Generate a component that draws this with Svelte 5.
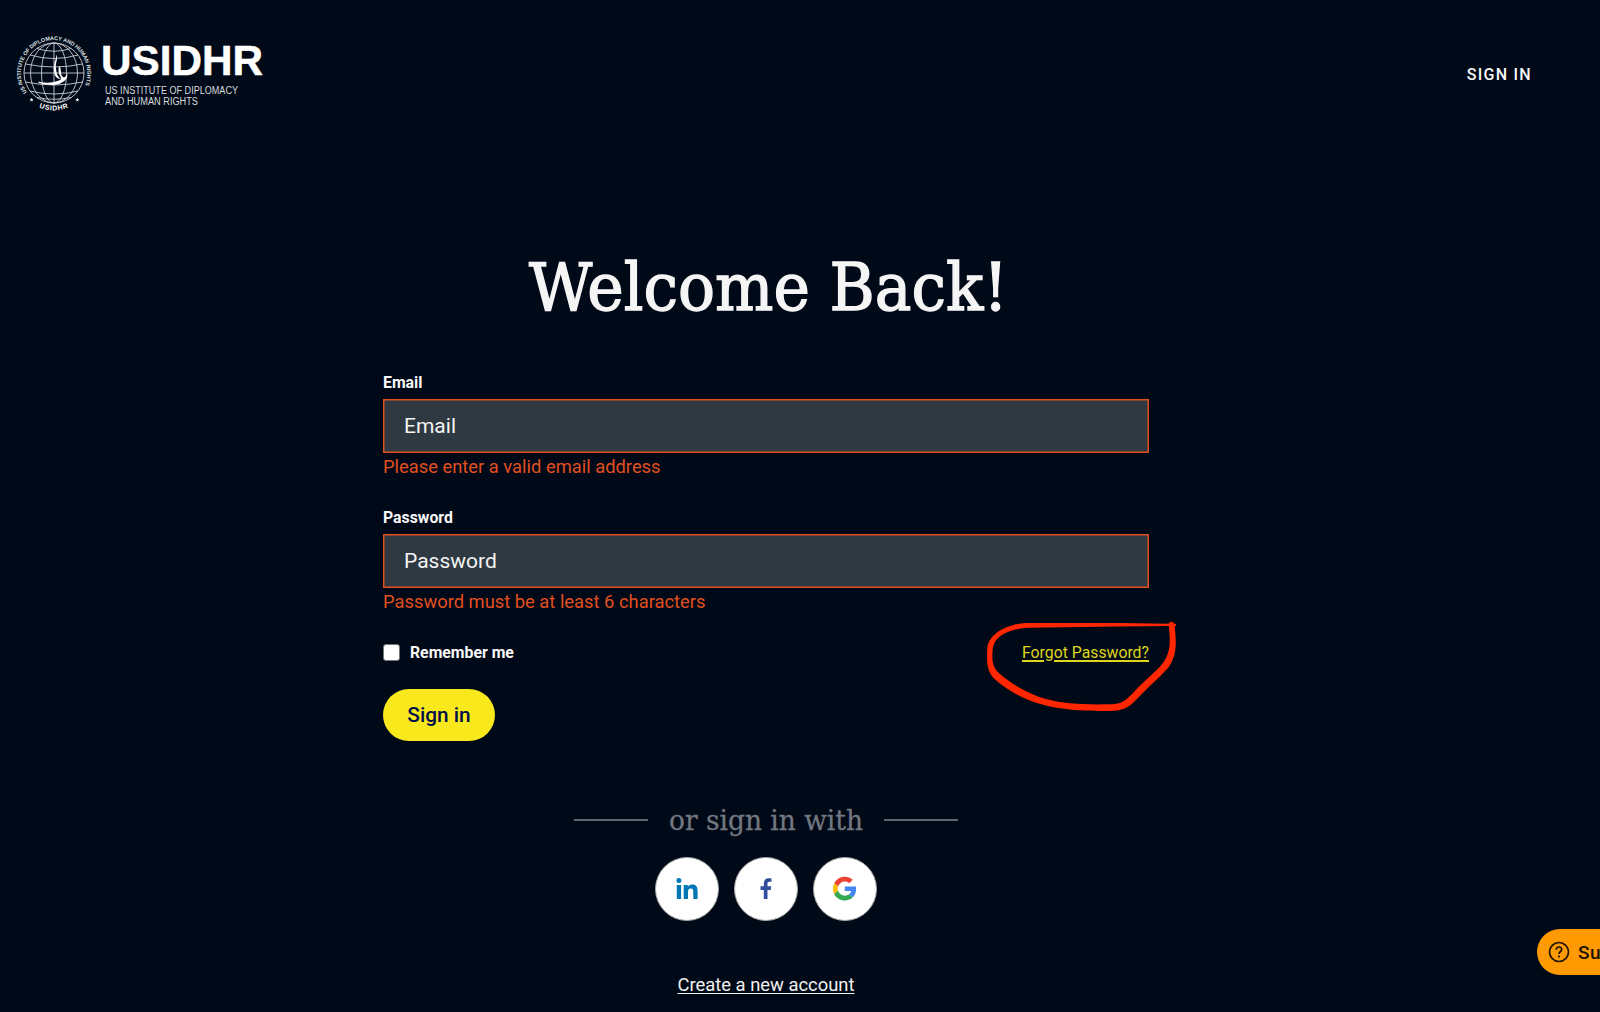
<script>
    let email = "";
    let password = "";
    let remember = false;
</script>

<style>
    :global(body) {
        background: #000917;
        overflow: hidden;
    }
    .page {
        position: relative;
        box-sizing: border-box;
        height: 1012px;
        overflow: hidden;
        background: #000917;
        color: #f8f8f8;
        font-family: Roboto, sans-serif;
    }
    header {
        display: flex;
        justify-content: space-between;
        align-items: center;
        height: 150px;
        padding-right: 68px;
    }
    .logo {
        display: block;
        overflow: visible;
        width: 280px;
        height: 150px;
        font-family: "Liberation Sans", sans-serif;
        fill: #fff;
    }
    .nav-link {
        margin-bottom: 2px;
        color: #f8f8f8;
        font-size: 16px;
        font-weight: 500;
        letter-spacing: 1.28px;
        text-decoration: none;
    }
    main {
        width: 766px;
        margin-left: 383px;
    }
    .title {
        display: block;
        overflow: visible;
        width: 510px;
        height: 90px;
        margin: 90px auto 0;
        fill: #f5f5f5;
        stroke: #f5f5f5;
        stroke-width: 1.4px;
        font-family: "Roboto Slab", "DejaVu Serif", serif;
    }
    form {
        padding-top: 43px;
    }
    .field {
        height: 135px;
    }
    .field label {
        display: block;
        height: 26px;
        line-height: 20px;
        font-size: 15.8px;
        font-weight: 700;
    }
    .field input {
        display: block;
        box-sizing: border-box;
        width: 100%;
        height: 54px;
        padding: 0 20px;
        border: 1px solid #e04f20;
        border-radius: 0;
        background: #2f3941;
        box-shadow: inset 0 0 0 0.5px #e04f20;
        color: #f8f8f8;
        font: 21px/50px Roboto, sans-serif;
    }
    .field input::placeholder {
        color: #f4f4f4;
        opacity: 1;
    }
    .error {
        margin: 0;
        color: #e04f20;
        font-size: 18.35px;
        line-height: 27px;
    }
    .options {
        display: flex;
        justify-content: space-between;
        align-items: center;
        height: 24px;
        margin-top: -3px;
        font-size: 15.8px;
    }
    .remember {
        display: flex;
        align-items: center;
        gap: 10px;
        font-weight: 700;
    }
    .remember input {
        appearance: none;
        width: 17px;
        height: 17px;
        margin: 0;
        border: 1px solid #767676;
        border-radius: 3px;
        background: #fff;
    }
    .forgot {
        color: #dfd51f;
        text-decoration-thickness: 1.5px;
        text-underline-offset: 2px;
    }
    .submit {
        display: block;
        width: 112px;
        height: 52px;
        margin-top: 25px;
        padding: 0;
        border: 0;
        border-radius: 26px;
        background: #f9e81b;
        color: #000f4b;
        font: 500 20.8px Roboto, sans-serif;
    }
    .divider {
        display: flex;
        align-items: center;
        justify-content: space-between;
        width: 384px;
        height: 40px;
        margin: 59px auto 0;
    }
    .divider span {
        width: 74px;
        height: 2px;
        background: #62656d;
    }
    .divider svg {
        overflow: visible;
        width: 200px;
        height: 40px;
        fill: #737780;
        stroke: #737780;
        stroke-width: 0.3px;
        font-family: "Roboto Slab", "DejaVu Serif", serif;
    }
    .social {
        display: flex;
        justify-content: center;
        gap: 15px;
        margin-top: 17px;
    }
    .social a {
        box-sizing: border-box;
        width: 64px;
        height: 64px;
        border: 1px solid #a5a5a5;
        border-radius: 50%;
        background: #fff;
    }
    .social svg {
        display: block;
        width: 62px;
        height: 62px;
    }
    .create {
        display: block;
        margin-top: 52px;
        color: #f0f0f0;
        font-size: 18.4px;
        line-height: 24px;
        text-align: center;
        text-underline-offset: 2px;
    }
    .scribble {
        position: absolute;
        top: 600px;
        left: 970px;
        width: 220px;
        height: 120px;
        fill: #ff2600;
        pointer-events: none;
    }
    .support {
        position: absolute;
        top: 929px;
        left: 1537px;
        display: flex;
        align-items: center;
        gap: 8px;
        box-sizing: border-box;
        width: 140px;
        height: 46px;
        padding: 0 0 0 11px;
        border: 0;
        border-radius: 23px;
        background: #ff9a03;
        color: #1c1300;
        font: 500 19px Roboto, sans-serif;
        letter-spacing: 0.4px;
    }
</style>

<div class="page">
    <header>
        <svg class="logo" viewBox="0 0 280 150" role="img" aria-label="USIDHR">
            <defs>
                <path id="ring-top" d="M27 92.500A33.200 33.200 0 1 1 80 94" />
                <path id="ring-bottom" d="M32 103.400A38 38 0 0 0 76 103.400" />
            </defs>
            <g fill="none" stroke="#c9cdd3" stroke-width="0.9">
                <circle cx="54" cy="73" r="30" />
                <ellipse cx="54" cy="73" rx="23.500" ry="30" />
                <ellipse cx="54" cy="73" rx="12.500" ry="30" />
                <path d="M54 43v60M24 73h60M25.500 64Q54 70 82.500 64M30 55Q54 62 78 55M37 48.500Q54 54 71 48.500M25.500 82Q54 88 82.500 82M30 91Q54 97 78 91M37 97.500Q54 101 71 97.500" />
            </g>
            <path d="M56.500 54.500C58.500 59 55 63 56 68.500C56.500 73 57.500 77 61 79Q56 79 54.500 74Q53 69 54.500 63Q56.500 58 56.500 54.500ZM59.300 66C62.500 70 59 75 64 77.500Q66.500 76.500 67.500 73.500Q67.500 80 62 82.500Q56 87 38.500 83V81.800Q52 84 59 80.500Q62.500 79 60 76Q57.500 71 59.300 66Z" />
            <text font-size="5.500" fill="#dde0e4" font-weight="bold" letter-spacing="-0.060">
                <textPath href="#ring-top">US INSTITUTE OF DIPLOMACY AND HUMAN RIGHTS</textPath>
            </text>
            <text font-size="7" font-weight="bold" letter-spacing="0.600">
                <textPath href="#ring-bottom" startOffset="50%" text-anchor="middle">USIDHR</textPath>
            </text>
            <path d="M31.500 97.800l.6 1.300 1.400.1-1.100.9.4 1.400-1.300-.8-1.200.8.4-1.400-1.100-.9 1.400-.1zM77.300 97.800l.6 1.300 1.400.1-1.100.9.4 1.400-1.300-.8-1.200.8.4-1.400-1.100-.9 1.400-.1z" />
            <text x="101" y="75.300" font-size="42.500" font-weight="bold" stroke="#fff" stroke-width="0.500" textLength="162" lengthAdjust="spacingAndGlyphs">USIDHR</text>
            <g font-size="10" fill="#d8dade">
                <text x="105" y="94" textLength="133" lengthAdjust="spacingAndGlyphs">US INSTITUTE OF DIPLOMACY</text>
                <text x="105" y="105.300" textLength="93" lengthAdjust="spacingAndGlyphs">AND HUMAN RIGHTS</text>
            </g>
        </svg>
        <a class="nav-link" href="#signin">SIGN IN</a>
    </header>

    <main>
        <svg class="title" viewBox="0 0 510 90" role="heading" aria-level="1">
            <text x="18" y="70" font-size="65" textLength="479" lengthAdjust="spacingAndGlyphs">Welcome Back!</text>
        </svg>

        <form on:submit|preventDefault>
            <div class="field">
                <label for="email">Email</label>
                <input id="email" type="text" placeholder="Email" bind:value={email} />
                <p class="error">Please enter a valid email address</p>
            </div>
            <div class="field">
                <label for="password">Password</label>
                <input id="password" type="password" placeholder="Password" bind:value={password} />
                <p class="error">Password must be at least 6 characters</p>
            </div>
            <div class="options">
                <label class="remember">
                    <input type="checkbox" bind:checked={remember} />
                    Remember me
                </label>
                <a class="forgot" href="#forgot">Forgot Password?</a>
            </div>
            <button class="submit">Sign in</button>
        </form>

        <div class="divider">
            <span></span>
            <svg viewBox="0 0 200 40">
                <text x="3" y="29.500" font-size="27.500" textLength="194" lengthAdjust="spacingAndGlyphs">or sign in with</text>
            </svg>
            <span></span>
        </div>

        <div class="social">
            <a href="#linkedin" aria-label="LinkedIn">
                <svg viewBox="0 0 62 62" fill="#0077b5">
                    <circle cx="22.900" cy="22.600" r="2.500" />
                    <path d="M20.800 27h4.300v14h-4.300zM27.700 27h4.100v1.900c.8-1.400 2.300-2.300 4.300-2.300 4.300 0 5.500 2.600 5.500 6.600V41h-4.300v-7c0-1.900-.4-3.600-2.500-3.600s-2.800 1.400-2.800 3.500V41h-4.300z" />
                </svg>
            </a>
            <a href="#facebook" aria-label="Facebook">
                <svg viewBox="0 0 62 62" fill="#30509b">
                    <path d="M28.800 41V32h-3.300v-3.700h3.300v-2.900c0-3.400 2-5.200 5-5.200 1.100 0 2.300.2 2.700.3v3.200h-1.900c-1.700 0-2.100.9-2.100 2.100v2.500h3.700l-.5 3.700h-3.200v9z" />
                </svg>
            </a>
            <a href="#google" aria-label="Google">
                <svg viewBox="0 0 62 62">
                    <g transform="translate(18.900 18.700) scale(.495)">
                        <path fill="#ea4335" d="M24 9.500c3.540 0 6.710 1.220 9.210 3.600l6.850-6.850C35.900 2.380 30.470 0 24 0 14.620 0 6.510 5.380 2.560 13.220l7.980 6.190C12.430 13.720 17.740 9.500 24 9.500z" />
                        <path fill="#4285f4" d="M46.980 24.550c0-1.570-.15-3.090-.38-4.550H24v9.020h12.940c-.58 2.960-2.260 5.480-4.780 7.180l7.730 6c4.510-4.180 7.090-10.360 7.090-17.650z" />
                        <path fill="#fbbc05" d="M10.530 28.590c-.48-1.450-.76-2.990-.76-4.590s.27-3.140.76-4.590l-7.980-6.190C.92 16.460 0 20.120 0 24c0 3.880.92 7.540 2.560 10.780l7.970-6.190z" />
                        <path fill="#34a853" d="M24 48c6.480 0 11.930-2.130 15.890-5.810l-7.730-6c-2.150 1.450-4.920 2.300-8.160 2.300-6.260 0-11.570-4.220-13.470-9.910l-7.980 6.190C6.510 42.620 14.620 48 24 48z" />
                    </g>
                </svg>
            </a>
        </div>

        <a class="create" href="#register">Create a new account</a>
    </main>

    <!-- hand-drawn loop around the reset link -->
    <svg class="scribble" viewBox="0 0 220 120">
        <path fill-rule="evenodd" d="M198.500 23.800L150 23L60 22.900C38 22.900 19 33 17.300 48C16.500 62 17 71 24 78.500C38 91 56 101 74 105C94 110 111 111 140 111C153 111 159 107 166 100C177 88 187 80 198 68C207 56 206.500 44 204.700 26L206 25.700L206 24L204 23.600C203 21 199.500 21 198.500 23.800ZM198.800 26L150 26.500L58 27.800C37 29 24 37 22.700 49C21.500 62 23 68 30 74C44 86 61 95 77 99.300C94 103.800 113 104.800 139 104.300C150 104.300 154 102 162 94C173 82 182 75 191 65.500C201 53 200.500 43 198.800 26Z" />
    </svg>

    <button class="support">
        <svg width="22" height="22" viewBox="0 0 22 22" fill="none" stroke="#1c1300" stroke-width="1.700">
            <circle cx="11" cy="11" r="9.500" />
            <path d="M8.200 8.800C8.400 5 13.900 5.200 13.700 8.600C13.600 10.500 11 10.600 11 13" />
            <path d="M11 14.500v2" />
        </svg>
        Support
    </button>
</div>
